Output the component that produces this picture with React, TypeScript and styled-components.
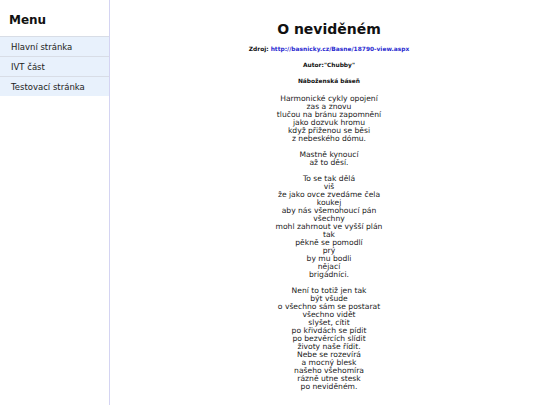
import React from "react";
import styled, { createGlobalStyle } from "styled-components";

const GlobalStyle = createGlobalStyle`
  html, body {
    margin: 0;
    padding: 0;
    background: #ffffff;
  }
  body {
    font-family: "DejaVu Sans", Verdana, sans-serif;
    color: #111;
  }
`;

const Layout = styled.div`
  display: flex;
  height: 100vh;
  overflow: hidden;
`;

const Sidebar = styled.nav`
  width: 109px;
  flex-shrink: 0;
  border-right: 1px solid #d4d4f2;
  background: #fff;
`;

const MenuTitle = styled.h2`
  margin: 0;
  padding: 13px 0 0 9px;
  height: 23px;
  font-size: 12px;
  font-weight: bold;
  line-height: 14px;
`;

const MenuList = styled.ul`
  list-style: none;
  margin: 0;
  padding: 0;
  border-top: 1px solid #d8dde6;
`;

const MenuItem = styled.li`
  height: 19px;
  padding-left: 11px;
  display: flex;
  align-items: center;
  background: #e8f1fc;
  border-bottom: 1px solid #d8dde6;
  font-size: 8.5px;
  color: #222;

  &:last-child {
    border-bottom: none;
  }
`;

const Main = styled.main`
  flex: 1;
  padding-left: 8px;
  text-align: center;
`;

const Title = styled.h1`
  margin: 0;
  padding-top: 21px;
  font-size: 14px;
  line-height: 17px;
  font-weight: bold;
`;

const Meta = styled.p<{ $gap: number }>`
  margin: ${(p) => p.$gap}px 0 0;
  font-size: 5.9px;
  line-height: 8px;
  font-weight: bold;

  a {
    color: #2a2ad0;
    text-decoration: none;
  }
`;

const Poem = styled.div`
  margin-top: 10px;
  font-size: 7.6px;
  line-height: 8px;
  color: #222;
`;

const Stanza = styled.p`
  margin: 0 0 8px;
`;

const stanzas: string[][] = [
  [
    "Harmonické cykly opojení",
    "zas a znovu",
    "tlučou na bránu zapomnění",
    "jako dozvuk hromu",
    "když přiženou se běsi",
    "z nebeského dómu.",
  ],
  ["Mastně kynoucí", "až to děsí."],
  [
    "To se tak dělá",
    "viš",
    "že jako ovce zvedáme čela",
    "koukej",
    "aby nás všemohoucí pán",
    "všechny",
    "mohl zahrnout ve vyšší plán",
    "tak",
    "pěkně se pomodlí",
    "prý",
    "by mu bodli",
    "nějací",
    "brigádníci.",
  ],
  [
    "Není to totiž jen tak",
    "být všude",
    "o všechno sám se postarat",
    "všechno vidět",
    "slyšet, cítit",
    "po křivdách se pídit",
    "po bezvěrcích slídit",
    "životy naše řídit.",
    "Nebe se rozevírá",
    "a mocný blesk",
    "našeho všehomíra",
    "rázně utne stesk",
    "po neviděném.",
  ],
];

export default function App() {
  return (
    <>
      <GlobalStyle />
      <Layout>
        <Sidebar>
          <MenuTitle>Menu</MenuTitle>
          <MenuList>
            <MenuItem>Hlavní stránka</MenuItem>
            <MenuItem>IVT část</MenuItem>
            <MenuItem>Testovací stránka</MenuItem>
          </MenuList>
        </Sidebar>
        <Main>
          <Title>O neviděném</Title>
          <Meta $gap={7}>
            Zdroj: <a href="#">http://basnicky.cz/Basne/18790-view.aspx</a>
          </Meta>
          <Meta $gap={8}>Autor:"Chubby"</Meta>
          <Meta $gap={8}>Náboženská báseň</Meta>
          <Poem>
            {stanzas.map((lines, i) => (
              <Stanza key={i}>
                {lines.map((line, j) => (
                  <React.Fragment key={j}>
                    {line}
                    {j < lines.length - 1 && <br />}
                  </React.Fragment>
                ))}
              </Stanza>
            ))}
          </Poem>
        </Main>
      </Layout>
    </>
  );
}
